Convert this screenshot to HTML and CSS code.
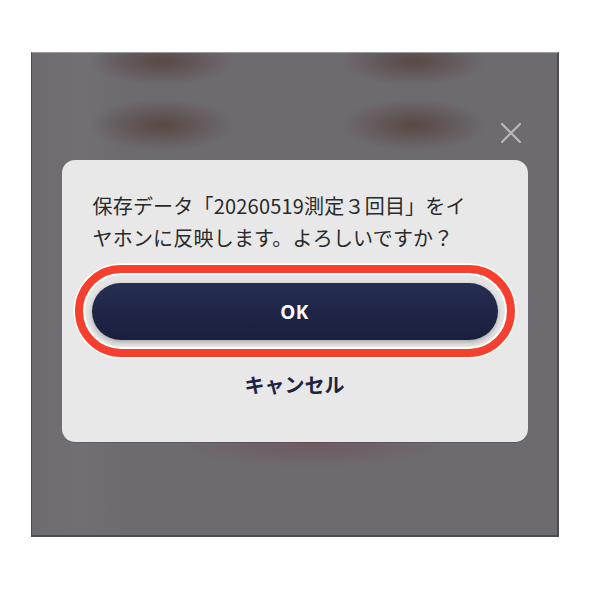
FILE: index.html
```html
<!DOCTYPE html>
<html lang="ja">
<head>
<meta charset="utf-8">
<link rel="stylesheet" href="styles.css">
</head>
<body>
<div class="screen">
  <button class="close" aria-label="閉じる">
    <svg width="20" height="20" viewBox="0 0 20 20"><path d="M1 1L19 19M19 1L1 19" stroke="#b9b9bb" stroke-width="2.2" stroke-linecap="round"/></svg>
  </button>
  <div class="dialog">
    <p class="message">保存データ「20260519測定３回目」をイ<br>ヤホンに反映します。よろしいですか？</p>
    <div class="highlight">
      <button class="ok">OK</button>
    </div>
    <button class="cancel">キャンセル</button>
  </div>
</div>
</body>
</html>
```
FILE: styles.css
```css
* { box-sizing: border-box; }
html, body { margin: 0; padding: 0; background: #ffffff; }
body {
  width: 590px;
  height: 590px;
  padding: 52px 0 0 31px;
  font-family: "Noto Sans CJK JP", "Noto Sans", sans-serif;
}
.screen {
  position: relative;
  width: 528px;
  height: 485px;
  border: 1px solid #4c4b4e;
  border-top-color: #9b9a9d;
  border-right-width: 2px;
  border-bottom-width: 2px;
  background-color: #6d6a70;
  background-image:
    radial-gradient(ellipse 72px 24px at 130px 8px, rgba(88,70,66,0.95), rgba(88,70,66,0)),
    radial-gradient(ellipse 72px 24px at 382px 8px, rgba(88,70,66,0.95), rgba(88,70,66,0)),
    radial-gradient(ellipse 72px 26px at 130px 72px, rgba(88,70,66,0.95), rgba(88,70,66,0)),
    radial-gradient(ellipse 72px 26px at 382px 72px, rgba(88,70,66,0.95), rgba(88,70,66,0)),
    radial-gradient(ellipse 130px 22px at 280px 392px, rgba(112,82,94,0.7), rgba(112,82,94,0)),
    linear-gradient(90deg, rgba(255,255,255,0) 0px, rgba(255,255,255,0.03) 50px, rgba(255,255,255,0) 90px);
  display: flex;
  flex-direction: column;
  align-items: center;
  padding-top: 107px;
}
.close {
  position: absolute;
  top: 70px;
  right: 36px;
  width: 20px;
  height: 20px;
  padding: 0;
  border: 0;
  background: none;
  display: flex;
}
.dialog {
  width: 466px;
  height: 282px;
  background: #e7e8e7;
  border-radius: 13px;
  padding: 30px 13px 0;
  display: flex;
  flex-direction: column;
  align-items: stretch;
  box-shadow: 0 1px 0 rgba(0,0,0,0.15);
}
.message {
  margin: 0;
  padding: 0 0 0 18px;
  font-size: 20px;
  line-height: 32px;
  color: #2a2a2c;
  letter-spacing: 0.2px;
}
.highlight {
  margin-top: 11px;
  border: 8px solid #f53f2f;
  border-radius: 50px;
  padding: 10px 9px 9px;
  box-shadow: 0 0 0 1.5px #ffffff, inset 0 0 0 2px #ffffff;
  background: #e3e4e3;
}
.ok {
  display: block;
  width: 100%;
  height: 57px;
  border: 0;
  border-radius: 30px;
  background: linear-gradient(180deg, #262e52 0%, #1e2446 60%, #1a1f3e 100%);
  color: #ffffff;
  font-family: "Noto Sans", "Noto Sans CJK JP", sans-serif;
  font-weight: 700;
  font-size: 19px;
  letter-spacing: 0.5px;
  box-shadow: 0 2px 5px rgba(0,0,0,0.28);
}
.cancel {
  margin-top: 14px;
  align-self: center;
  border: 0;
  background: none;
  padding: 0;
  height: 28px;
  font-family: "Noto Sans CJK JP", sans-serif;
  font-weight: 700;
  font-size: 20px;
  line-height: 28px;
  color: #1f2440;
}
```
